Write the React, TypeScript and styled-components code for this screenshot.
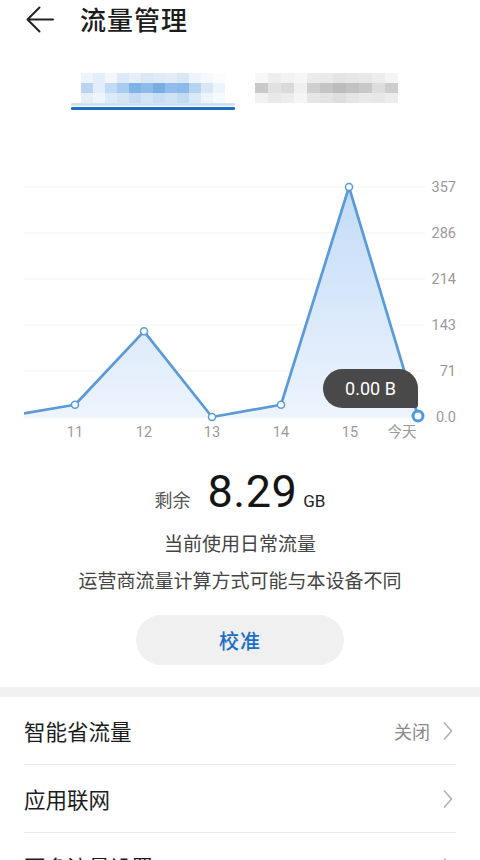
import React from "react";
import styled, { createGlobalStyle } from "styled-components";

const GlobalStyle = createGlobalStyle`
  html, body { margin: 0; padding: 0; background: #ffffff; }
  body {
    font-family: Roboto, "Noto Sans CJK SC", "Noto Sans", sans-serif;
    color: #1f1f1f;
    -webkit-font-smoothing: antialiased;
  }
  * { box-sizing: border-box; }
`;

const Page = styled.div`
  width: 480px;
  height: 860px;
  overflow: hidden;
  background: #fff;
  display: flex;
  flex-direction: column;
  & > * { flex-shrink: 0; }
`;

const Header = styled.header`
  height: 37px;
  display: flex;
  align-items: center;
  padding-left: 26px;
  gap: 26px;
`;

const Title = styled.h1`
  margin: 0;
  font-family: "Noto Sans CJK SC", sans-serif;
  font-size: 26px;
  font-weight: 500;
  color: #1c1c1c;
  letter-spacing: 1px;
  line-height: 37px;
`;

const TabsRow = styled.div`
  height: 83px;
  display: flex;
  align-items: flex-start;
  padding-top: 36px;
  padding-left: 71px;
  gap: 20px;
`;

const Tab = styled.div<{ $active?: boolean; $w: number }>`
  width: ${(p) => p.$w}px;
  display: flex;
  flex-direction: column;
  align-items: center;
  filter: blur(0.6px);
`;

const TabLine = styled.div<{ $active?: boolean }>`
  width: 100%;
  height: 3px;
  margin-top: 4px;
  border-radius: 1px;
  background: ${(p) => (p.$active ? "#1f6ec0" : "transparent")};
  box-shadow: ${(p) => (p.$active ? "0 -4px 0 #cfe2f6" : "none")};
`;

const ChartWrap = styled.div`
  position: relative;
  padding-top: 55px;
  height: 325px;
`;

const Tooltip = styled.div`
  position: absolute;
  left: 323px;
  top: 249px;
  width: 95px;
  height: 39px;
  background: #494949;
  color: #fff;
  font-family: Roboto, sans-serif;
  font-size: 18px;
  display: flex;
  align-items: center;
  justify-content: center;
  border-radius: 20px 20px 3px 20px;
`;

const Summary = styled.section`
  display: flex;
  flex-direction: column;
  align-items: center;
  padding-top: 21px;
`;

const RemainRow = styled.div`
  display: flex;
  align-items: baseline;
  height: 52px;
  line-height: 52px;
`;

const RemainLabel = styled.span`
  font-family: "Noto Sans CJK SC", sans-serif;
  font-size: 18px;
  color: #555;
  margin-right: 17px;
`;

const RemainValue = styled.span`
  font-family: Roboto, sans-serif;
  font-size: 45px;
  color: #151515;
  letter-spacing: 0.5px;
`;

const RemainUnit = styled.span`
  font-family: Roboto, sans-serif;
  font-size: 17px;
  color: #222;
  margin-left: 6px;
`;

const InfoText = styled.p<{ $gap: number }>`
  margin: ${(p) => p.$gap}px 0 0;
  font-family: "Noto Sans CJK SC", sans-serif;
  font-size: 19px;
  line-height: 28px;
  color: #444;
`;

const CalibrateButton = styled.button`
  margin-top: 21px;
  width: 208px;
  height: 50px;
  border: none;
  border-radius: 25px;
  background: #f0f0f0;
  color: #1a6ec4;
  font-family: "Noto Sans CJK SC", sans-serif;
  font-size: 20px;
  font-weight: 500;
  letter-spacing: 1px;
`;

const Separator = styled.div`
  margin-top: 22px;
  height: 10px;
  background: #f1f1f1;
`;

const List = styled.ul`
  margin: 0;
  padding: 0 24px;
  list-style: none;
`;

const ListItem = styled.li`
  height: 68px;
  display: flex;
  align-items: center;
  justify-content: space-between;
  border-bottom: 1px solid #e9e9e9;
`;

const ItemLabel = styled.span`
  font-family: "Noto Sans CJK SC", sans-serif;
  font-size: 21.5px;
  color: #1c1c1c;
`;

const ItemRight = styled.span`
  display: flex;
  align-items: center;
  gap: 13px;
  padding-right: 3px;
`;

const ItemValue = styled.span`
  font-family: "Noto Sans CJK SC", sans-serif;
  font-size: 18px;
  color: #8a8a8a;
`;

const BackArrow = () => (
  <svg width="28" height="28" viewBox="0 0 28 28" fill="none">
    <path
      d="M27 14.5 H2 M13.5 2.5 L1.5 14.5 L13.5 26.5"
      stroke="#222"
      strokeWidth="2"
      strokeLinecap="round"
      strokeLinejoin="round"
    />
  </svg>
);

const Chevron = () => (
  <svg width="10" height="18" viewBox="0 0 10 18" fill="none">
    <path d="M1.5 1 L8.5 9 L1.5 17" stroke="#b0b0b0" strokeWidth="1.6" strokeLinecap="round" strokeLinejoin="round" />
  </svg>
);

const Mosaic = ({ rows, cell, width }: { rows: string[][]; cell: number; width: number }) => (
  <svg width={width} height={rows.length * 10} viewBox={`0 0 ${width} ${rows.length * 10}`}>
    {rows.map((r, ri) =>
      r.map((c, ci) => (
        <rect key={`${ri}-${ci}`} x={ci * cell} y={ri * 10} width={cell + 0.5} height={10.5} fill={c} />
      ))
    )}
  </svg>
);

const blueRows = [
  ["#eef4fb", "#e4eefa", "#f3f7fc", "#dde9f8", "#e6eff9", "#d9e7f7", "#dfeaf8", "#e3edf9", "#dae7f7", "#eef4fb", "#f5f8fc", "#fafcfe"],
  ["#b9d5f2", "#e4eefa", "#c2daf3", "#a9cbef", "#7fb2e6", "#8dbbea", "#79aee5", "#90bdeb", "#8cbaea", "#b6d3f2", "#d7e7f8", "#eef4fb"],
  ["#e6eff9", "#f0f5fb", "#dce9f8", "#d4e4f7", "#c6dcf4", "#d3e4f6", "#c9def5", "#d0e2f6", "#c3daf4", "#dbe8f8", "#eef4fb", "#f7fafd"],
];

const greyRows = [
  ["#f7f7f7", "#eeeeee", "#f2f2f2", "#f6f6f6", "#ebebeb", "#e9e9e9", "#e4e4e4", "#e6e6e6", "#e8e8e8", "#ededed", "#f4f4f4"],
  ["#c9c9c9", "#e2e2e2", "#dadada", "#f0f0f0", "#cfcfcf", "#c4c4c4", "#bcbcbc", "#c2c2c2", "#c9c9c9", "#dddddd", "#cdcdcd"],
  ["#f1f1f1", "#e9e9e9", "#ececec", "#f5f5f5", "#e6e6e6", "#e3e3e3", "#dedede", "#e5e5e5", "#e9e9e9", "#e7e7e7", "#ececec"],
];

const BASE = 242;
const TOP = 12;
const MAX = 357;
const yOf = (v: number) => BASE - (v / MAX) * (BASE - TOP);

const data = [
  { x: 6, v: 1 },
  { x: 75, v: 19 },
  { x: 144, v: 133 },
  { x: 212, v: 0 },
  { x: 281, v: 19 },
  { x: 349, v: 357 },
  { x: 418, v: 1 },
];

const yTicks = ["357", "286", "214", "143", "71", "0.0"];
const xTicks = [
  { x: 75, t: "11" },
  { x: 144, t: "12" },
  { x: 212, t: "13" },
  { x: 281, t: "14" },
  { x: 350, t: "15" },
  { x: 402, t: "今天" },
];

const Chart = () => {
  const pts = data.map((d) => `${d.x},${yOf(d.v)}`).join(" L");
  const area = `M${data[0].x},${BASE} L${pts} L${data[data.length - 1].x},${BASE} Z`;
  const line = `M${pts}`;
  return (
    <svg width="480" height="270" viewBox="0 0 480 270">
      <defs>
        <linearGradient id="areaFill" x1="0" y1={TOP} x2="0" y2={BASE} gradientUnits="userSpaceOnUse">
          <stop offset="0" stopColor="#c3dbf8" />
          <stop offset="1" stopColor="#edf4fd" />
        </linearGradient>
        <clipPath id="plotClip">
          <rect x="24" y="0" width="420" height="270" />
        </clipPath>
      </defs>
      {yTicks.map((t, i) => {
        const y = TOP + i * 46;
        return (
          <g key={t}>
            <line x1="24" x2="425" y1={y} y2={y} stroke={i === 5 ? "#e6edf6" : "#f3f3f3"} strokeWidth="1" />
            <text
              x="456"
              y={y}
              textAnchor="end"
              dominantBaseline="central"
              fontFamily="Roboto, sans-serif"
              fontSize="14.5"
              fill="#9a9a9a"
            >
              {t}
            </text>
          </g>
        );
      })}
      <g clipPath="url(#plotClip)">
        <path d={area} fill="url(#areaFill)" />
        <path d={line} fill="none" stroke="#5b9ad8" strokeWidth="2.7" strokeLinejoin="round" />
        {data.slice(1, 6).map((d) => (
          <circle key={d.x} cx={d.x} cy={yOf(d.v)} r="3.5" fill="#fff" stroke="#5b9ad8" strokeWidth="1.5" />
        ))}
        <circle cx="418" cy={BASE - 1} r="5" fill="#fff" stroke="#4f97e0" strokeWidth="3" />
      </g>
      {xTicks.map((t) => (
        <text
          key={t.t}
          x={t.x}
          y="257"
          textAnchor="middle"
          dominantBaseline="central"
          fontFamily='Roboto, "Noto Sans CJK SC", sans-serif'
          fontSize="14.5"
          fill="#9a9a9a"
        >
          {t.t}
        </text>
      ))}
    </svg>
  );
};

export default function App() {
  return (
    <Page>
      <GlobalStyle />
      <Header>
        <BackArrow />
        <Title>流量管理</Title>
      </Header>
      <TabsRow>
        <Tab $active $w={164}>
          <Mosaic rows={blueRows} cell={12} width={144} />
          <TabLine $active />
        </Tab>
        <Tab $w={142}>
          <Mosaic rows={greyRows} cell={13} width={143} />
          <TabLine />
        </Tab>
      </TabsRow>
      <ChartWrap>
        <Chart />
        <Tooltip>0.00 B</Tooltip>
      </ChartWrap>
      <Summary>
        <RemainRow>
          <RemainLabel>剩余</RemainLabel>
          <RemainValue>8.29</RemainValue>
          <RemainUnit>GB</RemainUnit>
        </RemainRow>
        <InfoText $gap={11}>当前使用日常流量</InfoText>
        <InfoText $gap={9}>运营商流量计算方式可能与本设备不同</InfoText>
        <CalibrateButton>校准</CalibrateButton>
      </Summary>
      <Separator />
      <List>
        <ListItem>
          <ItemLabel>智能省流量</ItemLabel>
          <ItemRight>
            <ItemValue>关闭</ItemValue>
            <Chevron />
          </ItemRight>
        </ListItem>
        <ListItem>
          <ItemLabel>应用联网</ItemLabel>
          <ItemRight>
            <Chevron />
          </ItemRight>
        </ListItem>
        <ListItem>
          <ItemLabel>更多流量设置</ItemLabel>
          <ItemRight>
            <Chevron />
          </ItemRight>
        </ListItem>
      </List>
    </Page>
  );
}
